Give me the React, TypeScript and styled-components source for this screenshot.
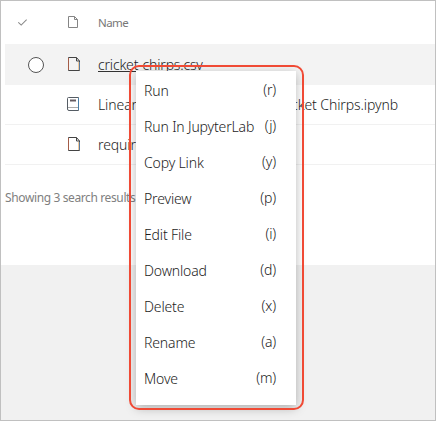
import React from 'react';
import styled, { createGlobalStyle } from 'styled-components';

const GlobalStyle = createGlobalStyle`
  *, *::before, *::after { box-sizing: border-box; }
  body { margin: 0; }
`;

const Frame = styled.main`
  position: relative;
  width: 436px;
  height: 421px;
  overflow: hidden;
  border: 1px solid #c0c0c0;
  background: #f1f1f1;
  color: #1c1c1c;
  font-family: 'Noto Sans', 'Open Sans', sans-serif;
  font-size: 14px;
  font-weight: 300;
`;

const Panel = styled.section`
  height: 264px;
  padding-left: 4px;
  background: #fff;
`;

const Row = styled.div<{ $variant?: 'header' | 'selected' }>`
  display: grid;
  grid-template-columns: 61px 32px 1fr;
  align-items: center;
  height: ${p => (p.$variant === 'header' ? 43 : p.$variant === 'selected' ? 41 : 40)}px;
  background: ${p => (p.$variant === 'selected' ? '#f3f3f3' : '#fff')};
  border-bottom: ${p => (p.$variant ? 'none' : '1px solid #f1f1f1')};
  svg { display: block; }
`;

const CheckCell = styled.div<{ $inset: number }>`
  padding-left: ${p => p.$inset}px;
`;

const IconCell = styled.div<{ $inset?: number }>`
  padding: 0 0 2px ${p => p.$inset ?? 2}px;
`;

const Name = styled.span<{ $spacing: number }>`
  justify-self: start;
  white-space: nowrap;
  line-height: 18px;
  letter-spacing: ${p => p.$spacing}px;
`;

const SplitName = styled(Name)`
  display: flex;
  justify-content: space-between;
  width: 300px;
`;

const LinkName = styled(Name)`
  height: 15px;
  border-bottom: 1px solid #333;
  line-height: 15px;
`;

const HeaderName = styled(Name)`
  color: #777;
  font-size: 11.5px;
  font-weight: 400;
`;

const Radio = styled.div`
  width: 16px;
  height: 16px;
  border: 1px solid #555;
  border-radius: 50%;
  background: #fff;
`;

const Summary = styled.p`
  margin: 24px 0 0;
  color: #808080;
  font-size: 12px;
  font-weight: 400;
  line-height: 18px;
  letter-spacing: -0.38px;
`;

const Menu = styled.ul`
  position: absolute;
  left: 135px;
  top: 70px;
  width: 160px;
  height: 334px;
  margin: 0;
  padding: 2px 20px 8px 8px;
  list-style: none;
  background: #fff;
  box-shadow: 0 3px 10px rgba(0, 0, 0, 0.28);
`;

const MenuItem = styled.li`
  display: flex;
  align-items: center;
  justify-content: space-between;
  height: 36px;
  white-space: nowrap;
  letter-spacing: -0.15px;
`;

const Label = styled.span`
  line-height: 18px;
`;

const Shortcut = styled.span`
  line-height: 18px;
  padding-bottom: 2px;
`;

const Highlight = styled.div`
  position: absolute;
  left: 128px;
  top: 64px;
  width: 175px;
  height: 345px;
  border: 2px solid #f04a35;
  border-radius: 10px;
`;

const FileIcon = ({ muted = false }: { muted?: boolean }) => (
  <svg width={muted ? 10 : 13} height={muted ? 12 : 14} viewBox={muted ? '0 0 10 12' : '0 0 13 14'} fill="none" stroke={muted ? '#858585' : '#444'}>
    {muted ? (
      <><path d="M.5.5h6l3 3v8h-9z" /><path d="M6.5.5v3h3" /></>
    ) : (
      <><path d="M.5.5h8l3 3.5v9.5H.5z" /><path d="M8.5.5V4h3" /><path d="M.5 1v12" stroke="#a35c47" /><path d="M11.5 5v8" stroke="#587ba0" /><path d="M10.5 5v8" stroke="#f0c99a" /></>
    )}
  </svg>
);

const NotebookIcon = () => (
  <svg width="12" height="14" viewBox="0 0 12 14" fill="none" stroke="#555c64">
    <path d="M1.5.5h10v13H2Q.5 13.5.5 12V1.5q0-1 1-1z" />
    <path d="M1 10.5h10.5" stroke="#aaa" />
    <path d="M3 3.5h6" stroke="#655c62" strokeWidth="2" />
    <path d="M11.5 1v12" stroke="#4b7fa8" />
  </svg>
);

const Check = () => (
  <svg width="9" height="7" viewBox="0 0 9 7" fill="none" stroke="#888" strokeWidth="1.1">
    <path d="M.3 3.3 3.2 6.1 8.7.6" />
  </svg>
);

const actions = [
  { label: 'Run', keyName: 'r' },
  { label: 'Run In JupyterLab', keyName: 'j' },
  { label: 'Copy Link', keyName: 'y' },
  { label: 'Preview', keyName: 'p' },
  { label: 'Edit File', keyName: 'i' },
  { label: 'Download', keyName: 'd' },
  { label: 'Delete', keyName: 'x' },
  { label: 'Rename', keyName: 'a' },
  { label: 'Move', keyName: 'm' },
];

export default function App() {
  return (
    <>
      <GlobalStyle />
      <Frame>
        <Panel>
          <Row $variant="header">
            <CheckCell $inset={13}><Check /></CheckCell>
            <IconCell><FileIcon muted /></IconCell>
            <HeaderName $spacing={-0.6}>Name</HeaderName>
          </Row>
          <Row $variant="selected">
            <CheckCell $inset={23}><Radio /></CheckCell>
            <IconCell><FileIcon /></IconCell>
            <LinkName $spacing={-0.18}>cricket-chirps.csv</LinkName>
          </Row>
          <Row>
            <CheckCell $inset={0} />
            <IconCell $inset={1}><NotebookIcon /></IconCell>
            <SplitName $spacing={-0.1}>
              <span>Linear Regression</span>
              <span>- Cricket Chirps.ipynb</span>
            </SplitName>
          </Row>
          <Row>
            <CheckCell $inset={0} />
            <IconCell><FileIcon /></IconCell>
            <Name $spacing={-0.1}>requirements.txt</Name>
          </Row>
          <Summary>Showing 3 search results</Summary>
        </Panel>
        <Menu>
          {actions.map(({ label, keyName }) => (
            <MenuItem key={label}>
              <Label>{label}</Label>
              <Shortcut>({keyName})</Shortcut>
            </MenuItem>
          ))}
        </Menu>
        <Highlight />
      </Frame>
    </>
  );
}
